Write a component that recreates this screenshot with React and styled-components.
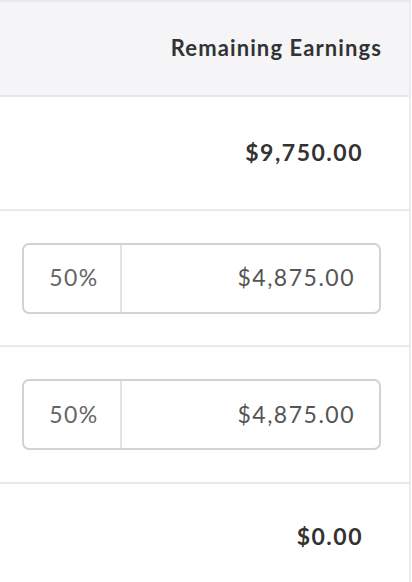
import React from "react";
import styled, { createGlobalStyle } from "styled-components";

const GlobalStyle = createGlobalStyle`
  body {
    margin: 0;
    background: #ffffff;
    font-family: "Lato", "Open Sans", sans-serif;
    color: #333;
  }
`;

const rows = [
  { type: "total", amount: "$9,750.00", height: 112 },
  { type: "split", percent: "50%", amount: "$4,875.00", height: 134 },
  { type: "split", percent: "50%", amount: "$4,875.00", height: 135 },
  { type: "total", amount: "$0.00", height: 106 },
];

const App = () => {
  return (
    <>
      <GlobalStyle />
      <Column>
        <Header>Remaining Earnings</Header>
        {rows.map((row, i) => (
          <Row key={i} $height={row.height}>
            {row.type === "total" ? (
              <Total>{row.amount}</Total>
            ) : (
              <SplitBox>
                <Percent>{row.percent}</Percent>
                <Amount>{row.amount}</Amount>
              </SplitBox>
            )}
          </Row>
        ))}
      </Column>
    </>
  );
};

export default App;

const Column = styled.div`
  width: 409px;
  border-top: 2px solid #e8e8ea;
  border-right: 2px solid #ececee;
  min-height: 580px;
  display: flex;
  flex-direction: column;
`;

const Header = styled.div`
  height: 95px;
  box-sizing: border-box;
  padding: 0 27px 2px 0;
  background: #f5f5f7;
  border-bottom: 2px solid #e6e6e8;
  display: flex;
  align-items: center;
  justify-content: flex-end;
  font-size: 22px;
  font-weight: 700;
  letter-spacing: 1.1px;
  color: #333;
`;

const Row = styled.div`
  height: ${(p) => p.$height}px;
  border-bottom: 2px solid #e9e9eb;
  display: flex;
  align-items: center;
  justify-content: flex-end;
  padding: 0 28px 0 22px;

  &:last-child {
    border-bottom: none;
  }
`;

const Total = styled.div`
  font-size: 23px;
  font-weight: 700;
  letter-spacing: 1.5px;
  color: #333;
  margin: 0 18px 3px 0;
`;

const SplitBox = styled.div`
  flex: 1;
  height: 67px;
  border: 2px solid #d2d2d4;
  border-radius: 7px;
  display: flex;
  align-items: stretch;
  font-size: 23px;
  letter-spacing: 1.5px;
  color: #555;
`;

const Percent = styled.div`
  width: 98px;
  padding: 0 0 2px 4px;
  box-sizing: border-box;
  border-right: 2px solid #e4e4e6;
  display: flex;
  align-items: center;
  justify-content: center;
  color: #666;
`;

const Amount = styled.div`
  flex: 1;
  display: flex;
  align-items: center;
  justify-content: flex-end;
  padding: 0 24px 2px 0;
`;
